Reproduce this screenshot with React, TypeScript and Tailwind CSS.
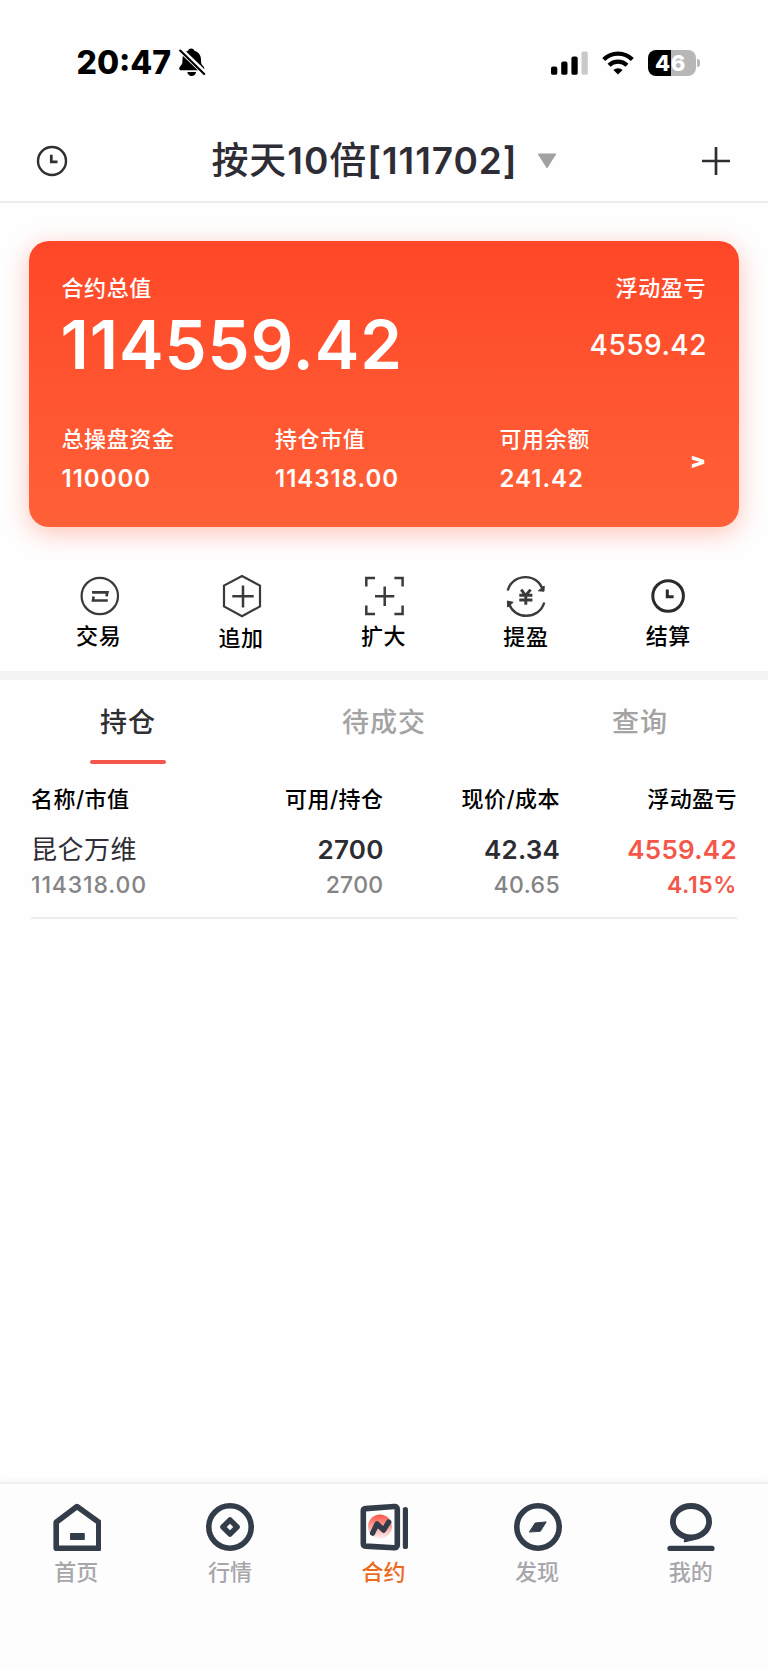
import type { ReactNode } from "react";

const INK = "#333c49";

function BellOff() {
  return (
    <svg width="27" height="29" viewBox="0 0 27 29" className="ml-[8px]">
      <path d="M12.2 .6c1.5 0 2.8.8 3.2 2.2 4 1.2 6.4 4.3 6.6 8.600l.2 3.600c.1 1.800 3.200 3.600 3.200 5.400 0 1.200-.8 1.800-2 1.800H2.200C1 22.200.2 21.600.2 20.400c0-1.800 3-3.600 3.100-5.400l.2-3.600C3.700 7.100 5.100 4 9.100 2.800 9.500 1.400 10.700.600 12.200.600z" fill="#000" />
      <path d="M8.300 24h8.800c-.5 2.400-2.200 4-4.400 4s-3.900-1.600-4.400-4z" fill="#000" />
      <path d="M0 .400L27 26.400" stroke="#fff" strokeWidth="5.400" />
      <path d="M1.200 2.600L25.200 26" stroke="#000" strokeWidth="2.100" strokeLinecap="round" />
    </svg>
  );
}

function Signal() {
  return (
    <svg width="38" height="24" viewBox="0 0 38 24">
      <rect x="0" y="15.500" width="6.300" height="8.300" rx="1.900" />
      <rect x="10.200" y="10.500" width="6.300" height="13.300" rx="1.900" />
      <rect x="20.400" y="5.500" width="6.300" height="18.300" rx="1.900" />
      <rect x="30.500" y="0.400" width="6.300" height="23.400" rx="1.900" fill="#c9c9c9" />
    </svg>
  );
}

function Wifi() {
  return (
    <svg width="32" height="24" viewBox="0 0 32 24" className="ml-[13px]" fill="none" stroke="#000" strokeWidth="4.200">
      <path d="M1.700 8.600a20.300 20.300 0 0 1 28.600 0" />
      <path d="M7 14.300a12.800 12.800 0 0 1 18 0" />
      <path d="M16 23.600l-4.600-4.500a6.600 6.600 0 0 1 9.200 0z" fill="#000" stroke="none" />
    </svg>
  );
}

function Battery() {
  return (
    <div className="ml-[14px] flex items-center">
      <div className="flex h-[26px] w-[48px] items-center justify-center rounded-[8px] bg-[linear-gradient(90deg,#000_47%,#b7b7b7_47%)] pr-[2px] text-[22px] leading-[26px] font-extrabold tracking-[0.6px] text-white">
        46
      </div>
      <div className="ml-[1.500px] h-[8px] w-[2.500px] rounded-r-full bg-[#b7b7b7]" />
    </div>
  );
}

function ClockIcon({ size, r, stroke }: { size: number; r: number; stroke: number }) {
  return (
    <svg width={size} height={size} viewBox={`${-size / 2} ${-size / 2} ${size} ${size}`} fill="none" stroke="#2f2f31" strokeWidth={stroke}>
      <circle r={r} />
      <path d="M-.7-6.200V.9H5.500" strokeWidth="2.700" />
    </svg>
  );
}

const actions: { label: string; icon: ReactNode; shift: string }[] = [
  {
    label: "交易",
    shift: "pt-0",
    icon: (
      <>
        <circle cx=".8" r="18.200" />
        <path d="M-6.900-3.600H8.400L7.500.400M8.800 4.500H-6l.6-4" strokeWidth="2.600" />
      </>
    ),
  },
  {
    label: "追加",
    shift: "pt-[2px]",
    icon: (
      <>
        <path d="M0-20L18-10.400V10.400L0 20.200-18 10.400V-10.400z" />
        <path d="M1-10.500V11.500M-9.700.200H11.700" strokeWidth="2.500" />
      </>
    ),
  },
  {
    label: "扩大",
    shift: "pt-0",
    icon: (
      <path d="M-17.700-9.500V-18H-9M10.400-18H18.600V-9.500M18.600 9.500V18H10.400M-9 18H-17.700V9.500M.700-9.500V10M-9 .200H10.300" strokeWidth="2.500" />
    ),
  },
  {
    label: "提盈",
    shift: "pt-[1px]",
    icon: (
      <>
        <path d="M-18.300-5.500C-15.800-14.500-8.500-18.900-.4-18.900 7.500-18.900 14.300-14 16.800-6M18.200 6.500C15.800 15.300 8 19.800.200 19.800-7.500 19.800-14.200 15.300-17 8" strokeWidth="2.400" />
        <path d="M12.400-5.200L18-4.800 18.200-10zM-12.800 6.300L-18.600 5-18.400 11z" fill="#3a3a3c" strokeWidth="1" />
        <path d="M-4.800-6.400L-.4-.500 4.600-6.400M-.2-.500V8.700M-6.700-.800H6.400M-6.700 4H6.400" strokeWidth="2.900" />
      </>
    ),
  },
  {
    label: "结算",
    shift: "pt-0",
    icon: (
      <>
        <circle cx="-.9" r="15.300" stroke="#2b2b2d" strokeWidth="3" />
        <path d="M-1.700-6.500V.700H4.600" stroke="#2b2b2d" strokeWidth="3" />
      </>
    ),
  },
];

const navItems: { label: string; icon: ReactNode; active?: boolean }[] = [
  {
    label: "首页",
    icon: (
      <>
        <path d="M3.200 45.300V19.300L24 3.500 45.800 19.300V45.300z" />
        <rect x="17" y="30" width="14.800" height="7" rx=".8" fill={INK} stroke="none" />
      </>
    ),
  },
  {
    label: "行情",
    icon: (
      <>
        <circle cx="24" cy="24" r="21.200" />
        <path d="M24 16.900L31.100 24 24 31.100 16.900 24z" strokeWidth="5.400" />
      </>
    ),
  },
  {
    label: "合约",
    active: true,
    icon: (
      <>
        <defs>
          <linearGradient id="glow" x1="0" y1="0" x2="0" y2="1">
            <stop offset="0" stopColor="#fb5648" />
            <stop offset="1" stopColor="#fb5648" stopOpacity="0.080" />
          </linearGradient>
        </defs>
        <path d="M5.500 5.600L34 3.500Q37.300 3.200 37.300 6.500V42Q37.300 45 34 44.700L5.500 43.100Q3.300 43 3.300 40.500V8Q3.300 5.800 5.500 5.600z" strokeWidth="5.600" />
        <path d="M45.400 6.700V43.500" strokeWidth="5.200" />
        <circle cx="20" cy="23.600" r="12" fill="url(#glow)" stroke="none" />
        <path d="M12.600 30.200L17 20.800 23.600 27.200 28.700 19" strokeWidth="5.300" />
      </>
    ),
  },
  {
    label: "发现",
    icon: (
      <>
        <circle cx="24" cy="24" r="21.200" />
        <path d="M15.500 28.700L21.200 20 32.200 18.900 26.500 28z" fill={INK} strokeWidth="1" />
      </>
    ),
  },
  {
    label: "我的",
    icon: (
      <>
        <ellipse cx="24" cy="18.700" rx="18.100" ry="15.700" strokeWidth="5.800" />
        <path d="M18 34.500L17.200 39 27.500 36.500z" fill={INK} strokeWidth="1" />
        <path d="M3 45.400H45" strokeWidth="5.200" />
      </>
    ),
  },
];

const summary = [
  { label: "总操盘资金", value: "110000", width: "w-[213.500px]" },
  { label: "持仓市值", value: "114318.00", width: "w-[224.500px]" },
  { label: "可用余额", value: "241.42", width: "grow" },
];

const headers = ["名称/市值", "可用/持仓", "现价/成本", "浮动盈亏"];

export default function App() {
  return (
    <div className="flex h-[1670px] w-[768px] flex-col overflow-hidden bg-[#fefefe] font-['Inter','Noto_Sans_CJK_SC',sans-serif] text-black">
      <div className="flex h-[100px] items-center pt-[25px] pr-[68.500px] pl-[76.500px]">
        <span className="text-[32px] leading-[40px] font-extrabold">20:47</span>
        <BellOff />
        <div className="ml-auto flex items-center">
          <Signal />
          <Wifi />
          <Battery />
        </div>
      </div>

      <header className="flex h-[103px] items-center justify-between border-b-2 border-[#ededee] pt-[20px] pr-[37px] pl-[35px] text-[#2e2d35]">
        <ClockIcon size={34} r={14} stroke={2.4} />
        <div className="-ml-[2px] flex items-center">
          <h1 className="text-[37px] leading-[50px] font-medium tracking-[0.950px]">
            按天<span className="font-semibold">10</span>倍<span className="font-semibold">[111702]</span>
          </h1>
          <svg width="20" height="16" viewBox="0 0 20 16" className="ml-[19px]">
            <path d="M1.200 1H18.800L10 14.800z" fill="#a1a1a4" stroke="#a1a1a4" strokeWidth="1" strokeLinejoin="round" />
          </svg>
        </div>
        <svg width="30" height="30" viewBox="0 0 30 30" stroke="#2f2f33" strokeWidth="2.700">
          <path d="M15 1V29M1 15H29" />
        </svg>
      </header>

      <section className="mx-[29px] mt-[38px] flex h-[286px] shrink-0 flex-col rounded-[20px] bg-linear-to-b from-[#ff4728] to-[#ff6037] px-[33px] pt-[31px] text-white shadow-[0_6px_26px_rgba(255,72,40,0.32)]">
        <div className="flex justify-between">
          <div className="-ml-[0.500px]">
            <div className="text-[22px] leading-[32px] font-medium tracking-[0.600px]">合约总值</div>
            <div className="-ml-[1px] pt-[1px] text-[67px] leading-[80px] font-semibold tracking-[0.900px]">114559.42</div>
          </div>
          <div className="text-right">
            <div className="text-[22px] leading-[32px] font-medium tracking-[0.600px]">浮动盈亏</div>
            <div className="-mr-[1px] pt-[1px] text-[28px] leading-[80px] font-medium tracking-[0.500px]">4559.42</div>
          </div>
        </div>
        <div className="mt-[35px] flex items-center">
          {summary.map((s) => (
            <div key={s.label} className={s.width}>
              <div className="-ml-[0.500px] text-[22px] leading-[38px] font-medium tracking-[0.600px]">{s.label}</div>
              <div className="-ml-[0.500px] pt-[1px] text-[24px] leading-[40px] font-semibold tracking-[1px]">{s.value}</div>
            </div>
          ))}
          <span className="scale-y-90 pt-[3px] text-[23px] leading-[30px] font-black">&gt;</span>
        </div>
      </section>

      <nav className="mt-[47px] flex h-[97px] shrink-0 px-[28px]">
        {actions.map((a) => (
          <button key={a.label} className="flex flex-1 flex-col items-center">
            <svg width="44" height="44" viewBox="-22 -22 44 44" fill="none" stroke="#3a3a3c" strokeWidth="2.200">
              {a.icon}
            </svg>
            <span className={`mt-[2px] -ml-[1px] text-[22px] leading-[32px] font-medium tracking-[0.600px] ${a.shift}`}>{a.label}</span>
          </button>
        ))}
      </nav>
      <div className="h-[9px] shrink-0 bg-[#f3f3f3]" />

      <div className="grid h-[99px] shrink-0 grid-cols-3 text-[27px] leading-[56px] font-medium tracking-[1px] text-[#a3a3a3]">
        <button className="flex flex-col items-center pt-[15px] text-[#2f2f31]">
          持仓
          <span className="mt-[9px] h-[4px] w-[76px] rounded-full bg-[#f5564a]" />
        </button>
        <button className="flex justify-center pt-[15px]">待成交</button>
        <button className="flex justify-center pt-[15px]">查询</button>
      </div>

      <div className="mx-[31px] grid shrink-0 grid-cols-[1fr_176.500px_176.500px_177px] border-b-2 border-[#ececec] pb-[16px] text-right text-[23px] leading-[31px] text-[#848486]">
        {headers.map((h) => (
          <div key={h} className="text-[22px] leading-[40px] font-medium tracking-[0.450px] text-black first:text-left">{h}</div>
        ))}
        <div className="pt-[10px] text-left text-[26px] leading-[41px] tracking-[0.500px] text-[#2e2d35]">昆仑万维</div>
        <div className="pt-[10px] text-[26px] leading-[41px] font-semibold tracking-[0.200px] text-[#2c2c33]">2700</div>
        <div className="pt-[10px] text-[26px] leading-[41px] font-semibold tracking-[0.200px] text-[#2c2c33]">42.34</div>
        <div className="pt-[10px] text-[26px] leading-[41px] font-semibold tracking-[0.300px] text-[#f5564a]">4559.42</div>
        <div className="text-left font-medium tracking-[0.850px]">114318.00</div>
        <div className="font-medium tracking-[0.300px]">2700</div>
        <div className="font-medium tracking-[0.400px]">40.65</div>
        <div className="font-semibold tracking-[0.600px] text-[#f5564a]">4.15%</div>
      </div>

      <footer className="mt-auto flex h-[188px] shrink-0 border-t-2 border-[#f0f0f1] bg-[#fdfdfe] pt-[19px] shadow-[0_-2px_6px_rgba(0,0,0,0.040)]">
        {navItems.map((n) => (
          <button key={n.label} className="flex flex-1 flex-col items-center">
            <svg width="48" height="48" viewBox="0 0 48 48" fill="none" stroke={INK} strokeWidth="5.600" strokeLinejoin="round" strokeLinecap="round">
              {n.icon}
            </svg>
            <span className={n.active ? "mt-[6px] -ml-[1px] text-[22px] leading-[30px] font-medium text-[#ec6a1e]" : "mt-[6px] -ml-[1px] text-[22px] leading-[30px] font-medium text-[#a8a6aa]"}>{n.label}</span>
          </button>
        ))}
      </footer>
    </div>
  );
}
